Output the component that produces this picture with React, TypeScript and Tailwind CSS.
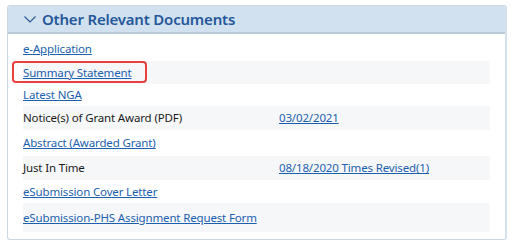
export default function App() {
  const rows: { label: string; link: boolean; value?: string; h: string; striped: boolean; boxed?: boolean }[] = [
    { label: "e-Application", link: true, h: "h-[24px]", striped: false },
    { label: "Summary Statement", link: true, h: "h-[23px]", striped: true, boxed: true },
    { label: "Latest NGA", link: true, h: "h-[22px]", striped: false },
    { label: "Notice(s) of Grant Award (PDF)", link: false, value: "03/02/2021", h: "h-[24px]", striped: true },
    { label: "Abstract (Awarded Grant)", link: true, h: "h-[26px]", striped: false },
    { label: "Just In Time", link: false, value: "08/18/2020 Times Revised(1)", h: "h-[24px]", striped: true },
    { label: "eSubmission Cover Letter", link: true, h: "h-[23px]", striped: false },
    { label: "eSubmission-PHS Assignment Request Form", link: true, h: "h-[29px]", striped: true },
  ];

  return (
    <div className="w-[511px] h-[243px] bg-white pt-[5px] pl-[7px]" style={{ fontFamily: '"Noto Sans", "Open Sans", sans-serif' }}>
      <div className="w-[500px] h-[235px] border border-[#cbd8e6] border-r-2 border-r-[#d3e0ee] rounded-[3px] overflow-hidden">
        <div className="h-[28px] bg-[#d2e1f0] border-b-2 border-[#b9c8d8] flex items-center pl-[16px] gap-[6px]">
          <svg width="12" height="7" viewBox="0 0 12 7" fill="none">
            <path d="M0.5 0.5l5.5 5.5L11.5 0.5" stroke="#2a5a98" strokeWidth="1.2" />
          </svg>
          <span className="text-[15px] font-semibold tracking-[-0.2px] text-[#25589a] leading-none">Other Relevant Documents</span>
        </div>
        <div className="pt-[3px] pl-[15px] pr-[15px]">
          {rows.map((r) => (
            <div key={r.label} className={`relative flex items-center text-[11.5px] tracking-[-0.15px] ${r.h} ${r.striped ? "bg-[#f6f7f9]" : ""}`}>
              {r.boxed && (
                <div className="absolute left-[-11px] top-0 w-[135px] h-[22px] border-2 border-[#e8403c] rounded-[4px]" />
              )}
              <div className="w-[256px]">
                {r.link ? (
                  <a href="#" className="text-[#1c5fae] underline">{r.label}</a>
                ) : (
                  <span className="text-[#1b1b1b]">{r.label}</span>
                )}
              </div>
              {r.value && <a href="#" className="text-[#1c5fae] underline">{r.value}</a>}
            </div>
          ))}
        </div>
      </div>
    </div>
  );
}
